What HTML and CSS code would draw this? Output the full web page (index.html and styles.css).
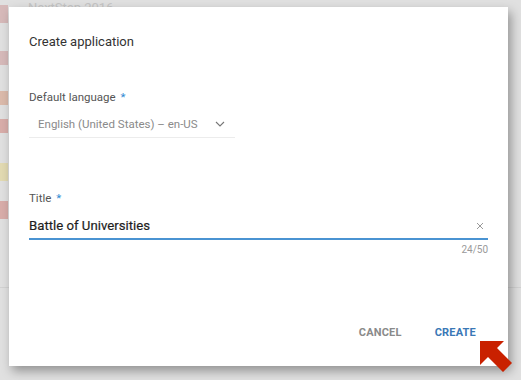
FILE: index.html
```html
<!DOCTYPE html>
<html lang="en">
<head>
  <meta charset="UTF-8">
  <meta name="viewport" content="width=device-width, initial-scale=1.0">
  <title>Create application</title>
  <link rel="stylesheet" href="styles.css">
</head>
<body>
  <div class="page">
    <ul class="app-list">
      <li class="app-row first"><span class="app-icon pink tall"></span><span class="app-name">NextStep 2016</span></li>
      <li class="app-row gap-1"><span class="app-icon pink"></span></li>
      <li class="app-row gap-2"><span class="app-icon orange"></span></li>
      <li class="app-row gap-3"><span class="app-icon red"></span></li>
      <li class="app-row gap-4"><span class="app-icon yellow tall"></span></li>
      <li class="app-row gap-5"><span class="app-icon red tall"></span></li>
    </ul>
    <hr class="divider">

    <div class="dialog">
      <h1 class="dialog-title">Create application</h1>

      <label class="field-label">Default language <span class="req">*</span></label>
      <div class="select">
        <span class="select-value">English (United States) – en-US</span>
        <svg class="chevron" width="10" height="6" viewBox="0 0 10 6"><path d="M1 1l4 4 4-4" fill="none" stroke="#777" stroke-width="1.1"/></svg>
      </div>

      <label class="field-label title-label">Title <span class="req">*</span></label>
      <div class="input">
        <span class="input-value">Battle of Universities</span>
        <svg class="clear" width="8" height="8" viewBox="0 0 8 8"><path d="M1 1l6 6M7 1l-6 6" stroke="#999" stroke-width="1"/></svg>
      </div>
      <div class="counter">24/50</div>

      <div class="actions">
        <button class="btn cancel">CANCEL</button>
        <button class="btn create">CREATE</button>
      </div>
    </div>

    <svg class="pointer" width="36" height="36" viewBox="0 0 36 36">
      <polygon points="2,1 26,1 19,8 34,23 25,32 10,17 2,25" fill="#c92100"/>
    </svg>
  </div>
</body>
</html>
```

FILE: styles.css
```css
body {
  margin: 0;
  font-family: Roboto, "Noto Sans", sans-serif;
  background: #dedede;
}

.page {
  position: relative;
  width: 521px;
  height: 380px;
  overflow: hidden;
  background: #e0e0e0;
}

.app-list {
  list-style: none;
  margin: 0;
  padding: 0;
}

.app-row {
  display: flex;
  align-items: flex-start;
  gap: 20px;
}

.app-row.first {
  margin-top: 5px;
}

.app-icon {
  width: 8px;
  height: 14px;
  opacity: 0.45;
}

.app-icon.tall {
  height: 18px;
}

.pink { background: #c98a8a; }
.orange { background: #d48b6a; }
.red { background: #cf6e66; }
.yellow { background: #e5d27a; }

.app-name {
  font-size: 13px;
  line-height: 14px;
  color: #c4c4c4;
  margin-top: -4px;
}

.gap-1 { margin-top: 28px; }
.gap-2 { margin-top: 26px; }
.gap-3 { margin-top: 14px; }
.gap-4 { margin-top: 30px; }
.gap-5 { margin-top: 20px; }

.divider {
  margin: 68px 0 0 0;
  border: none;
  border-top: 1px solid #d2d2d2;
}

.dialog {
  position: absolute;
  left: 9px;
  top: 7px;
  width: 499px;
  height: 359px;
  box-sizing: border-box;
  padding: 25px 20px 0 20px;
  background: #fff;
  display: flex;
  flex-direction: column;
  box-shadow: 3px 5px 10px rgba(0, 0, 0, 0.35);
}

.dialog-title {
  margin: 0;
  font-size: 13px;
  font-weight: 400;
  line-height: 20px;
  color: #333;
}

.field-label {
  margin-top: 37px;
  font-size: 11.5px;
  line-height: 16px;
  color: #555;
}

.req {
  color: #2d8bd2;
  margin-left: 2px;
}

.select {
  margin-top: 5px;
  width: 206px;
  height: 28px;
  padding-left: 9px;
  box-sizing: border-box;
  display: flex;
  align-items: center;
  justify-content: space-between;
  padding-right: 10px;
  border-bottom: 1px solid #ececec;
}

.select-value {
  font-size: 11.5px;
  color: #8a8a8a;
}

.title-label {
  margin-top: 52px;
}

.input {
  margin-top: 7px;
  height: 25px;
  display: flex;
  align-items: center;
  justify-content: space-between;
  padding-right: 4px;
  border-bottom: 2px solid #4a93d2;
}

.input-value {
  font-size: 13.2px;
  font-weight: 400;
  color: #1e1e1e;
  -webkit-text-stroke: 0.2px #1e1e1e;
}

.counter {
  margin-top: 3px;
  text-align: right;
  font-size: 10px;
  line-height: 14px;
  color: #9a9a9a;
}

.actions {
  margin-top: auto;
  margin-bottom: 16px;
  margin-right: 4px;
  display: flex;
  justify-content: flex-end;
  gap: 17px;
}

.btn {
  height: 36px;
  padding: 0 8px;
  border: none;
  background: none;
  font-family: Roboto, "Noto Sans", sans-serif;
  font-size: 11px;
  font-weight: 700;
  letter-spacing: 0.2px;
  cursor: pointer;
}

.cancel { color: #8a8a8a; }
.create { color: #3a78b6; }

.pointer {
  position: absolute;
  left: 478px;
  top: 340px;
}
```
